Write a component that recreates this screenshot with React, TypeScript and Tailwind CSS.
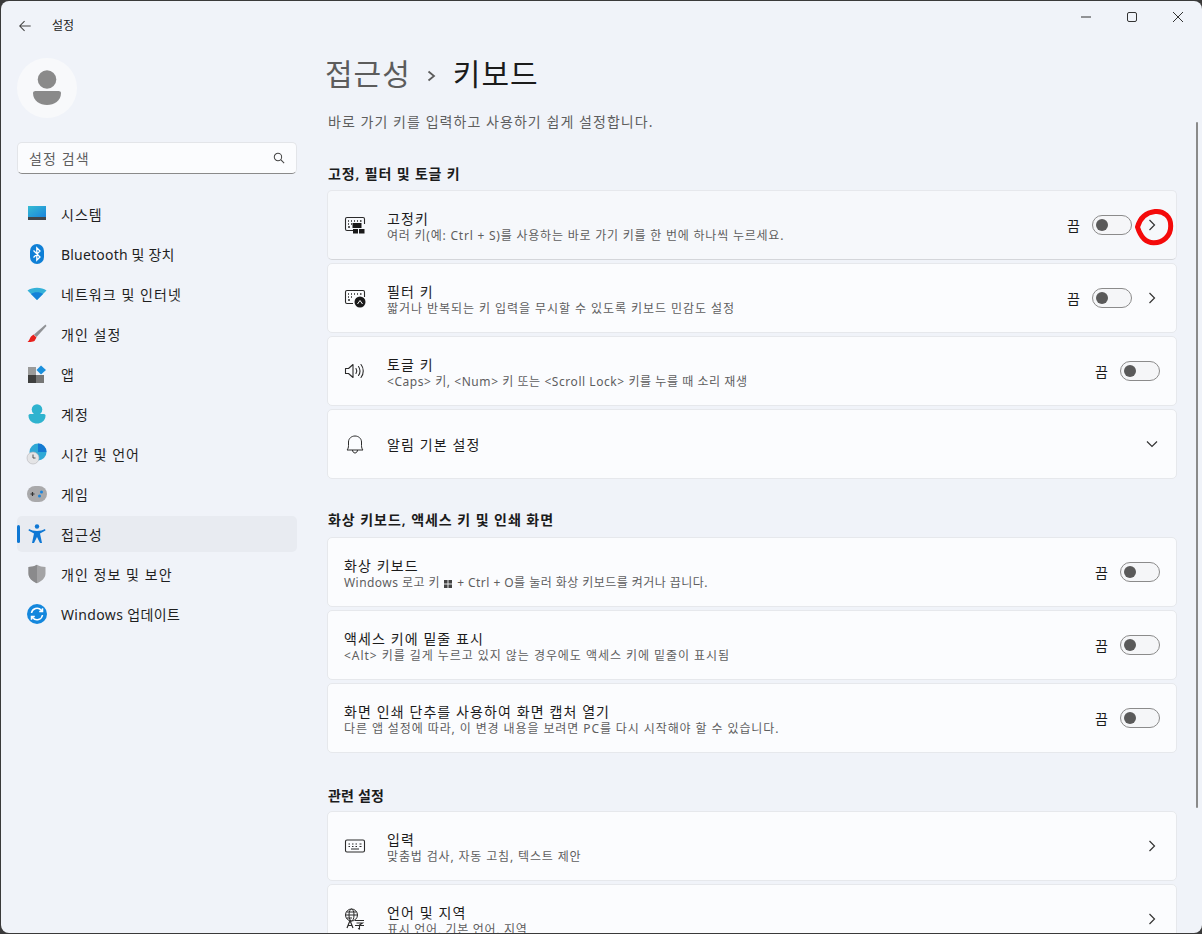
import type { ReactNode } from 'react';

const FONT = '[font-family:"Noto_Sans","Noto_Sans_CJK_KR",sans-serif]';

// --- NAV ICONS ---
function SystemIcon() {
  return (
    <svg width="20" height="20" viewBox="0 0 20 20">
      <defs>
        <linearGradient id="sys" x1="0" y1="0" x2="1" y2="1">
          <stop offset="0" stopColor="#36bcd3" />
          <stop offset="1" stopColor="#1a84dc" />
        </linearGradient>
      </defs>
      <rect x="1" y="2" width="18" height="11" fill="url(#sys)" />
      <rect x="1" y="13" width="18" height="3" fill="#41464b" />
    </svg>
  );
}

function BluetoothIcon() {
  return (
    <svg width="20" height="22" viewBox="0 0 20 22">
      <rect x="3" y="1" width="14" height="20" rx="7" fill="#0f7fd6" />
      <path d="M6.5 7.5 13 14l-3.2 3.2V4.8L13 8l-6.5 6.5" fill="none" stroke="#fff" strokeWidth="1.3" />
    </svg>
  );
}

function WifiIcon() {
  return (
    <svg width="20" height="20" viewBox="0 0 20 20">
      <path d="M0.5 6.5C5.5 2.7 14.5 2.7 19.5 6.5L10 16Z" fill="#35b1d8" />
      <path d="M4 10C7 7.8 13 7.8 16 10L10 16Z" fill="#1482d8" />
    </svg>
  );
}

function BrushIcon() {
  return (
    <svg width="20" height="20" viewBox="0 0 20 20">
      <path d="M18.5 0.5 19.5 2 9.5 13 7 10.5Z" fill="#8f9195" />
      <path d="M6.5 10.5 9.5 13.5 7.5 17C5 18.2 2.5 18.2 0.5 18 2.5 16.5 2.8 14 4 12.5Z" fill="#e8211d" />
    </svg>
  );
}

function AppsIcon() {
  return (
    <svg width="20" height="20" viewBox="0 0 20 20">
      <rect x="1" y="3" width="8" height="8" fill="#9a9a9a" />
      <rect x="1" y="11" width="8" height="8" fill="#3f3f3f" />
      <rect x="9" y="11" width="8" height="8" fill="#767676" />
      <path d="M14 1.5 19 6 14 10.5 9.5 6Z" fill="#1a8fdc" />
    </svg>
  );
}

function AccountIcon() {
  return (
    <svg width="20" height="20" viewBox="0 0 20 20">
      <circle cx="10" cy="5.500" r="5.300" fill="#2fb3cf" />
      <path d="M1.500 11.500C1.500 10.500 2.500 10 3.500 10H16.500C17.500 10 18.500 10.500 18.500 11.500 18.500 17 14 19.500 10 19.500S1.500 17 1.500 11.500Z" fill="#2fb3cf" />
    </svg>
  );
}

function TimeIcon() {
  return (
    <svg width="22" height="22" viewBox="0 0 22 22">
      <circle cx="12" cy="9" r="8.5" fill="#2fa9d6" />
      <path d="M12 .5A8.5 8.5 0 0 1 20.5 9H12Z" fill="#1579d2" />
      <circle cx="7" cy="15" r="6" fill="#e4e4e6" stroke="#b6b6b8" strokeWidth="0.6" />
      <path d="M7 11.5V15H9.5" fill="none" stroke="#444" strokeWidth="0.9" />
    </svg>
  );
}

function GameIcon() {
  return (
    <svg width="22" height="20" viewBox="0 0 22 20">
      <rect x="1" y="2" width="20" height="16" rx="8" fill="#a9a9ab" />
      <path d="M4.5 10H8.5M6.5 8V12" stroke="#333" strokeWidth="1.2" />
      <circle cx="15.5" cy="8" r="1.5" fill="#1a84dc" />
      <circle cx="13.5" cy="12" r="1.5" fill="#1a84dc" />
    </svg>
  );
}

function AccessIcon() {
  return (
    <svg width="20" height="20" viewBox="0 0 20 20">
      <circle cx="10" cy="2.5" r="2.2" fill="#0f78d4" />
      <path d="M2 5C4 6 7 7 10 7S16 6 18 5L18.500 6.500 13 9.500 15 19H13L10 13 7 19H5L7 9.500 1.500 6.500Z" fill="#0f78d4" />
    </svg>
  );
}

function ShieldIcon() {
  return (
    <svg width="20" height="20" viewBox="0 0 20 20">
      <path d="M10 .8C12.500 2.500 15.500 3 18.500 3V9.500C18.500 14 14.500 17.500 10 19.200 5.500 17.500 1.500 14 1.500 9.500V3C4.500 3 7.500 2.500 10 .8Z" fill="#a3a3a5" />
      <path d="M10 .8V19.200C5.500 17.500 1.500 14 1.500 9.500V3C4.500 3 7.500 2.500 10 .8Z" fill="#8a8a8c" />
    </svg>
  );
}

function UpdateIcon() {
  return (
    <svg width="20" height="20" viewBox="0 0 20 20">
      <circle cx="10" cy="10" r="10" fill="#1487dd" />
      <path d="M4.500 9A5.600 5.600 0 0 1 14.300 6.200L15.500 7.500M15.500 4.200V7.500H12.200M15.500 11A5.600 5.600 0 0 1 5.700 13.800L4.500 12.500M4.500 15.800V12.500H7.800" fill="none" stroke="#fff" strokeWidth="1.500" />
    </svg>
  );
}

// --- ROW ICONS ---
function KeyboardBase({ children }: { children?: ReactNode }) {
  return (
    <svg width="22" height="20" viewBox="0 0 22 20" fill="none" stroke="#2a2a2a">
      <path d="M9 15.500H3C1.900 15.500 1.500 15 1.500 14V4C1.500 3 1.900 2.500 3 2.500H19C20.100 2.500 20.500 3 20.500 4V9" strokeWidth="1.100" />
      <path d="M4 6H5M7 6H8M10 6H11M13 6H14M16 6H17.500M4 9H5M7 9H8M4 12H6" strokeWidth="1.300" />
      {children}
    </svg>
  );
}

function StickyIcon() {
  return (
    <KeyboardBase>
      <rect x="8.500" y="8" width="9" height="5" fill="#1a1a1a" stroke="none" />
      <rect x="9" y="14" width="5" height="4.500" fill="#1a1a1a" stroke="none" />
      <rect x="15" y="14" width="5.500" height="4.500" fill="#1a1a1a" stroke="none" />
    </KeyboardBase>
  );
}

function FilterIcon() {
  return (
    <KeyboardBase>
      <circle cx="16" cy="14" r="5.500" fill="#1a1a1a" stroke="none" />
      <path d="M13.500 16 16 12.500 18.500 16" stroke="#fff" strokeWidth="1" />
    </KeyboardBase>
  );
}

function SpeakerIcon() {
  return (
    <svg width="24" height="22" viewBox="0 0 22 20" fill="none" stroke="#2a2a2a" strokeWidth="1.100">
      <path d="M1.500 7.500H4.500L9 3.500V16.500L4.500 12.500H1.500Z" strokeLinejoin="round" />
      <path d="M12 7.500C13 9 13 11 12 12.500M14.500 5.500C16.500 8 16.500 12 14.500 14.500M17 3.500C20 7 20 13 17 16.500" strokeLinecap="round" />
    </svg>
  );
}

function BellIcon() {
  return (
    <svg width="25" height="25" viewBox="0 0 22 22" fill="none" stroke="#2a2a2a" strokeWidth="1">
      <path d="M3 16.500C4 15.500 4.500 14 4.500 12V8.500C4.500 5 7.500 2.500 11 2.500S17.500 5 17.500 8.500V12C17.500 14 18 15.500 19 16.500Z" strokeLinejoin="round" />
      <path d="M8.500 16.500C8.500 18 9.500 19.500 11 19.500S13.500 18 13.500 16.500" />
    </svg>
  );
}

function KeyboardIcon() {
  return (
    <svg width="22" height="20" viewBox="0 0 22 20" fill="none" stroke="#2a2a2a">
      <rect x="1.500" y="4" width="19" height="12" rx="1.500" strokeWidth="1.100" />
      <path d="M4.500 8H6M8 8H9.500M11.500 8H13M15.500 8H17.500M4.500 10.500H6M8 10.500H9.500M11.500 10.500H13M15.500 10.500H17.500M7 13H15" strokeWidth="1.100" />
    </svg>
  );
}

function LanguageIcon() {
  return (
    <svg width="22" height="22" viewBox="0 0 22 22" fill="none" stroke="#2a2a2a" strokeWidth="1">
      <circle cx="7.500" cy="7" r="6" />
      <ellipse cx="7.500" cy="7" rx="2.500" ry="6" />
      <path d="M1.500 7H13.500M2.500 4H12.500M2.500 10H8" />
      <path d="M3 20 6 12.500 9 20M4 17.500H8" strokeWidth="1.200" />
      <path d="M11 12.500H20M12.500 15H18.500L15.500 17V21L14 20.500M11 17.500H20" strokeWidth="1.100" />
    </svg>
  );
}

function Chevron({ down = false }: { down?: boolean }) {
  return (
    <svg width="12" height="12" viewBox="0 0 12 12" fill="none" stroke="#333" strokeWidth="1.200" className="shrink-0">
      {down ? <path d="M1 3.500 6 8.500 11 3.500" /> : <path d="M3.500 1 8.500 6 3.500 11" />}
    </svg>
  );
}

// --- UI HELPERS ---
function Toggle() {
  return (
    <div className="w-10 h-5 rounded-full border border-[#8b8b8b] bg-[#f5f6f8] flex items-center pl-[3px] shrink-0">
      <div className="w-3 h-3 rounded-full bg-[#5a5a5a]" />
    </div>
  );
}

function NavItem({ icon, label, active = false, tracking = 'tracking-[1.05px]' }: { icon: ReactNode; label: string; active?: boolean; tracking?: string }) {
  return (
    <div className={`relative h-9 rounded-[5px] flex items-center ${active ? 'bg-[#e8ebf1]' : ''}`}>
      {active && <div className="absolute left-0 top-[9px] w-[3px] h-[18px] rounded-full bg-[#0f78d4]" />}
      <div className="w-[40px] mr-[4px] flex justify-center shrink-0">{icon}</div>
      <span className={`text-[14px] text-[#1f1f1f] ${tracking}`}>{label}</span>
    </div>
  );
}

function Row({
  icon, title, desc, descTracking = 'tracking-[0.85px]', toggle = false, chevron = false, down = false, hover = false,
}: {
  icon?: ReactNode; title: string; desc?: ReactNode; descTracking?: string; toggle?: boolean; chevron?: boolean; down?: boolean; hover?: boolean;
}) {
  return (
    <div className={`h-[70px] shrink-0 rounded-[5px] border border-[#e6e8ec] flex items-center pl-4 pr-[16px] ${hover ? 'bg-[#f6f8fb] border-b-[#d4d6da]' : 'bg-[#fbfcfe]'}`}>
      {icon && <div className="w-[22px] flex justify-center mr-[21px] shrink-0">{icon}</div>}
      <div className={`flex-1 min-w-0 ${desc ? 'pt-[3px]' : 'pt-[1px]'}`}>
        <div className="text-[14px] leading-[17px] text-[#1b1b1b] tracking-[1.1px]">{title}</div>
        {desc && <div className={`mt-[1px] text-[12px] leading-[16px] text-[#5e5e5e] ${descTracking}`}>{desc}</div>}
      </div>
      {toggle && (
        <div className="flex items-center gap-3">
          <span className="text-[14px] text-[#1b1b1b]">끔</span>
          <Toggle />
        </div>
      )}
      {chevron && <div className="ml-[14px] mr-[2px]"><Chevron /></div>}
      {down && <div className="mr-[2px]"><Chevron down /></div>}
    </div>
  );
}

function SectionTitle({ children, className = '' }: { children: ReactNode; className?: string }) {
  return <h2 className={`text-[14px] leading-[20px] font-semibold text-[#1b1b1b] pl-px ${className}`}>{children}</h2>;
}

const NAV = [
  { icon: <SystemIcon />, label: '시스템' },
  { icon: <BluetoothIcon />, label: 'Bluetooth 및 장치', tracking: 'tracking-[0.2px]' },
  { icon: <WifiIcon />, label: '네트워크 및 인터넷' },
  { icon: <BrushIcon />, label: '개인 설정' },
  { icon: <AppsIcon />, label: '앱' },
  { icon: <AccountIcon />, label: '계정' },
  { icon: <TimeIcon />, label: '시간 및 언어' },
  { icon: <GameIcon />, label: '게임' },
  { icon: <AccessIcon />, label: '접근성', active: true },
  { icon: <ShieldIcon />, label: '개인 정보 및 보안' },
  { icon: <UpdateIcon />, label: 'Windows 업데이트', tracking: 'tracking-[0.35px]' },
];

export default function App() {
  return (
    <div className={`w-[1202px] h-[934px] bg-[#3a3a3a] overflow-hidden pt-px pl-px pb-px ${FONT}`}>
      <div className="relative h-full bg-[#f0f3f9] rounded-lg flex overflow-hidden">

        {/* --- SIDEBAR --- */}
        <aside className="w-[326px] shrink-0 flex flex-col">
          <div className="flex items-center h-[48px] pl-[17px] pt-[2px]">
            <svg width="14" height="14" viewBox="0 0 16 16" fill="none" stroke="#444" strokeWidth="1.200">
              <path d="M14.500 8H2M7.500 2.500 2 8l5.500 5.500" />
            </svg>
            <span className="ml-[20px] text-[12px] text-[#1b1b1b]">설정</span>
          </div>
          <div className="ml-4 mt-[9px] w-[60px] h-[60px] rounded-full bg-[#f8f9fb] flex items-center justify-center">
            <svg width="28" height="36" viewBox="0 0 28 36">
              <circle cx="14" cy="9.500" r="9.300" fill="#8a8a8a" />
              <path d="M0 23C0 21.700 1 21 2.500 21H25.500C27 21 28 21.700 28 23 28 31 21 35 14 35S0 31 0 23Z" fill="#8a8a8a" />
            </svg>
          </div>
          <div className="ml-4 mt-[24px] w-[280px] h-8 rounded-[5px] bg-[#fbfcfe] border border-[#e3e5e9] border-b-[#8a8a8a] flex items-center pl-[11px] pr-[11px] justify-between">
            <span className="text-[14px] text-[#5e5e5e] tracking-[1.1px]">설정 검색</span>
            <svg width="12" height="12" viewBox="0 0 14 14" fill="none" stroke="#444" strokeWidth="1.200">
              <circle cx="5.800" cy="5.800" r="4.300" />
              <path d="M9 9 13 13" />
            </svg>
          </div>
          <nav className="ml-4 mt-[22px] w-[280px] flex flex-col gap-1">
            {NAV.map(n => <NavItem key={n.label} icon={n.icon} label={n.label} active={n.active} tracking={n.tracking} />)}
          </nav>
        </aside>

        {/* --- MAIN --- */}
        <main className="flex-1 min-w-0 pr-[25px] flex flex-col">
          <div className="h-[53px] shrink-0" />
          <h1 className="text-[30px] leading-[40px] tracking-[1px] text-[#5c5c5c] flex items-center -ml-[2px] shrink-0">
            접근성
            <svg width="10" height="12" viewBox="0 0 10 12" fill="none" stroke="#5c5c5c" strokeWidth="1.800" className="ml-[16px] mr-[16px] mt-1">
              <path d="M1.500 1.500 7 6 1.500 10.500" />
            </svg>
            <span className="text-[#1b1b1b]">키보드</span>
          </h1>
          <p className="mt-[18px] text-[14px] leading-[20px] text-[#5e5e5e] pl-px tracking-[1.05px] shrink-0">
            바로 가기 키를 입력하고 사용하기 쉽게 설정합니다.
          </p>

          <SectionTitle className="mt-[32px] mb-[6px] tracking-[0.85px]">고정, 필터 및 토글 키</SectionTitle>
          <div className="flex flex-col gap-[3px] shrink-0">
            <Row hover icon={<StickyIcon />} title="고정키" desc="여러 키(예: Ctrl + S)를 사용하는 바로 가기 키를 한 번에 하나씩 누르세요." descTracking="tracking-[0.78px]" toggle chevron />
            <Row icon={<FilterIcon />} title="필터 키" desc="짧거나 반복되는 키 입력을 무시할 수 있도록 키보드 민감도 설정" descTracking="tracking-[0.94px]" toggle chevron />
            <Row icon={<SpeakerIcon />} title="토글 키" desc="<Caps> 키, <Num> 키 또는 <Scroll Lock> 키를 누를 때 소리 재생" descTracking="tracking-[0.56px]" toggle />
            <Row icon={<BellIcon />} title="알림 기본 설정" down />
          </div>

          <SectionTitle className="mt-[31px] mb-[7px] tracking-[0.95px]">화상 키보드, 액세스 키 및 인쇄 화면</SectionTitle>
          <div className="flex flex-col gap-[3px] shrink-0">
            <Row
              title="화상 키보드"
              desc={<>Windows 로고 키 <svg width="8" height="8" viewBox="0 0 9 9" className="inline align-[-1px] mr-[2px]" fill="#444"><rect width="4" height="4" /><rect x="5" width="4" height="4" /><rect y="5" width="4" height="4" /><rect x="5" y="5" width="4" height="4" /></svg> + Ctrl + O를 눌러 화상 키보드를 켜거나 끕니다.</>}
              descTracking="tracking-[0.45px]"
              toggle
            />
            <Row title="액세스 키에 밑줄 표시" desc="<Alt> 키를 길게 누르고 있지 않는 경우에도 액세스 키에 밑줄이 표시됨" descTracking="tracking-[0.95px]" toggle />
            <Row title="화면 인쇄 단추를 사용하여 화면 캡처 열기" desc="다른 앱 설정에 따라, 이 변경 내용을 보려면 PC를 다시 시작해야 할 수 있습니다." descTracking="tracking-[0.9px]" toggle />
          </div>

          <SectionTitle className="mt-[33px] mb-[5px] tracking-[0.2px]">관련 설정</SectionTitle>
          <div className="flex flex-col gap-[3px] shrink-0">
            <Row icon={<KeyboardIcon />} title="입력" desc="맞춤법 검사, 자동 고침, 텍스트 제안" chevron />
            <Row icon={<LanguageIcon />} title="언어 및 지역" desc="표시 언어, 기본 언어, 지역" descTracking="tracking-[0.7px]" chevron />
          </div>
        </main>

        {/* window controls */}
        <div className="absolute top-[6px] right-[18px] flex items-center gap-[34px]">
          <svg width="12" height="20" viewBox="0 0 12 20" stroke="#333" strokeWidth="1" fill="none"><path d="M1 10H11" /></svg>
          <svg width="12" height="20" viewBox="0 0 12 20" stroke="#333" strokeWidth="1" fill="none"><rect x="1.500" y="5.500" width="9" height="9" rx="1.500" /></svg>
          <svg width="12" height="20" viewBox="0 0 12 20" stroke="#333" strokeWidth="1" fill="none"><path d="M1 5 11 15M11 5 1 15" /></svg>
        </div>

        {/* scrollbar */}
        <div className="absolute top-[121px] right-[4px] w-[2px] h-[686px] rounded-full bg-[#8a8a8a]" />

        {/* red annotation */}
        <svg width="42" height="40" viewBox="0 0 42 40" className="absolute left-[1133px] top-[206px]" fill="none" stroke="#f40a0a" strokeWidth="5">
          <path d="M3.500 20C6 11 12 5.500 21 4.500 30 3.500 37 10 36.700 19 36.800 29 29 35.700 20 35.700 11 36 6 28 3.500 20Z" />
        </svg>
      </div>
    </div>
  );
}
